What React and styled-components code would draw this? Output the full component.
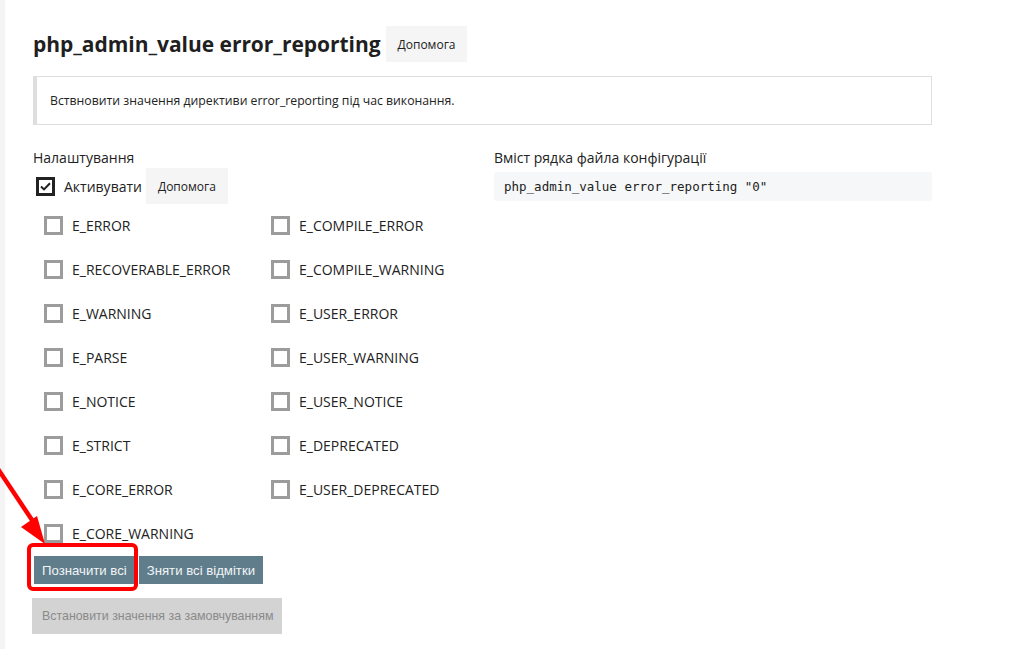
import React, { useState } from 'react';
import styled, { createGlobalStyle } from 'styled-components';

const GlobalStyle = createGlobalStyle`
  html, body {
    margin: 0;
    padding: 0;
    background: #fff;
  }
  body {
    font-family: "Open Sans", "Noto Sans", sans-serif;
    color: #222;
  }
`;

const Page = styled.div`
  display: flex;
  min-height: 649px;
  position: relative;
  overflow: hidden;
`;

const Strip = styled.div`
  width: 5px;
  flex: none;
  background: #f4f4f4;
`;

const Content = styled.div`
  padding: 26px 0 0 28px;
  width: 899px;
`;

const Header = styled.div`
  display: flex;
  align-items: center;
  gap: 5px;
`;

const Title = styled.h1`
  margin: 0;
  font-size: 21px;
  font-weight: 700;
  color: #1f1f1f;
  letter-spacing: -0.04px;
`;

const HelpBtn = styled.button`
  height: 36px;
  padding: 0 12px;
  border: none;
  background: #f5f5f5;
  font-family: "Open Sans", sans-serif;
  font-size: 12px;
  color: #222;
  cursor: pointer;
`;

const Note = styled.div`
  margin-top: 14px;
  height: 49px;
  box-sizing: border-box;
  border: 1px solid #dedede;
  border-left: 4px solid #dedede;
  display: flex;
  align-items: center;
  padding-left: 13px;
  font-size: 12.25px;
  color: #222;
`;

const Columns = styled.div`
  display: grid;
  grid-template-columns: 461px 438px;
  margin-top: 23px;
`;

const Label = styled.div`
  font-size: 14px;
  line-height: 20px;
  color: #222;
`;

const ActivateRow = styled.div`
  display: flex;
  align-items: center;
  height: 36px;
  padding-left: 3px;
`;

const Box = styled.span`
  width: 19px;
  height: 19px;
  box-sizing: border-box;
  border: 3px solid ${p => (p.$checked ? '#222' : '#9c9c9c')};
  display: inline-flex;
  align-items: center;
  justify-content: center;
  flex: none;
`;

const CheckText = styled.span`
  margin-left: 9px;
  font-size: 14px;
  color: #222;
`;

const Grid = styled.div`
  display: grid;
  grid-auto-flow: column;
  grid-template-rows: repeat(8, 44px);
  grid-template-columns: 227px 227px;
  padding-left: 11px;
`;

const Item = styled.label`
  display: flex;
  align-items: center;
  padding-bottom: 2px;
  cursor: pointer;
`;

const BtnRow = styled.div`
  display: flex;
  gap: 4px;
  padding-left: 1px;
`;

const ActionBtn = styled.button`
  height: 28px;
  padding: 0 8px;
  border: none;
  background: #607d8b;
  color: #f2f5f7;
  font-family: "Liberation Sans", Arial, sans-serif;
  font-size: 13.2px;
  cursor: pointer;
`;

const DefaultBtn = styled.button`
  margin-top: 14px;
  height: 36px;
  padding: 0 9px 0 10px;
  border: none;
  background: #d3d3d3;
  color: #8a8a8a;
  font-family: "Liberation Sans", Arial, sans-serif;
  font-size: 12.4px;
  margin-left: -1px;
`;

const Code = styled.div`
  margin-top: 4px;
  height: 29px;
  background: #f6f7f9;
  border-radius: 3px;
  display: flex;
  align-items: center;
  padding-left: 10px;
  font-family: "DejaVu Sans Mono", monospace;
  font-size: 12.5px;
  color: #222;
`;

const Overlay = styled.svg`
  position: absolute;
  left: 0;
  top: 0;
  pointer-events: none;
`;

const flags = [
  'E_ERROR', 'E_RECOVERABLE_ERROR', 'E_WARNING', 'E_PARSE', 'E_NOTICE', 'E_STRICT',
  'E_CORE_ERROR', 'E_CORE_WARNING', 'E_COMPILE_ERROR', 'E_COMPILE_WARNING',
  'E_USER_ERROR', 'E_USER_WARNING', 'E_USER_NOTICE', 'E_DEPRECATED', 'E_USER_DEPRECATED',
];

const Tick = () => (
  <svg width="11" height="9" viewBox="0 0 11 9">
    <path d="M1 4.6 L4 7.4 L10 1.2" fill="none" stroke="#222" strokeWidth="2" />
  </svg>
);

export default function App() {
  const [checked, setChecked] = useState({});
  const toggle = f => setChecked(c => ({ ...c, [f]: !c[f] }));

  return (
    <>
      <GlobalStyle />
      <Page>
        <Strip />
        <Content>
          <Header>
            <Title>php_admin_value error_reporting</Title>
            <HelpBtn>Допомога</HelpBtn>
          </Header>
          <Note>Вствновити значення директиви error_reporting під час виконання.</Note>
          <Columns>
            <div>
              <Label>Налаштування</Label>
              <ActivateRow>
                <Box $checked><Tick /></Box>
                <CheckText>Активувати</CheckText>
                <HelpBtn style={{ marginLeft: 4 }}>Допомога</HelpBtn>
              </ActivateRow>
              <Grid>
                {flags.map(f => (
                  <Item key={f} onClick={() => toggle(f)}>
                    <Box $checked={checked[f]}>{checked[f] && <Tick />}</Box>
                    <CheckText>{f}</CheckText>
                  </Item>
                ))}
              </Grid>
              <BtnRow>
                <ActionBtn>Позначити всі</ActionBtn>
                <ActionBtn>Зняти всі відмітки</ActionBtn>
              </BtnRow>
              <DefaultBtn disabled>Встановити значення за замовчуванням</DefaultBtn>
            </div>
            <div>
              <Label>Вміст рядка файла конфігурації</Label>
              <Code>php_admin_value error_reporting "0"</Code>
            </div>
          </Columns>
        </Content>
        <Overlay width="1015" height="649">
          <rect x="29" y="545" width="107" height="44" rx="4" fill="none" stroke="#ff0000" strokeWidth="4" />
          <line x1="-4" y1="466" x2="38" y2="529" stroke="#ff0000" strokeWidth="4.5" />
          <polygon points="45,544 21,527 37,516" fill="#ff0000" />
        </Overlay>
      </Page>
    </>
  );
}
